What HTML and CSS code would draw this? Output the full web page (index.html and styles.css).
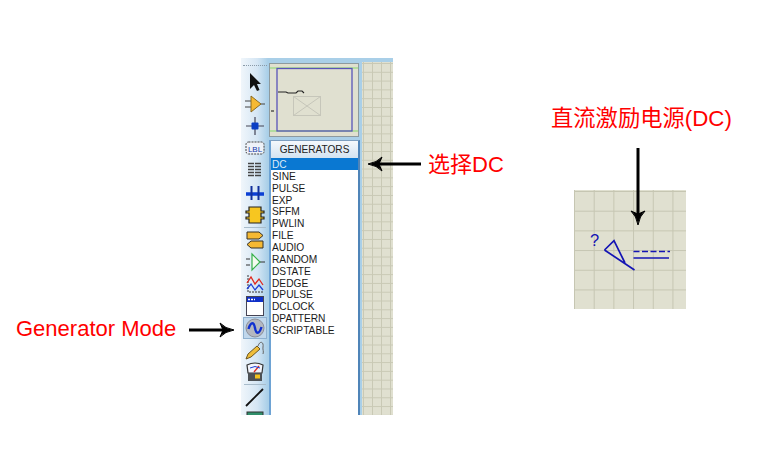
FILE: index.html
```html
<!DOCTYPE html>
<html lang="en">
<head>
    <meta charset="UTF-8">
    <meta name="viewport" content="width=device-width, initial-scale=1.0">
    <title>Generator Mode</title>
    <link rel="stylesheet" href="styles.css">
</head>
<body>

<div class="figure">
    <!-- Editor window cut-out -->
    <div class="window">
        <div class="toolbar">
            <div class="grip"></div>
            <div class="tool">
                <svg width="20" height="20" viewBox="0 0 20 20"><path d="M5 1 L5 17 L9 13 L12 19 L14.5 18 L12 12 L16 12 Z" fill="#111"/></svg>
            </div>
            <div class="tool">
                <svg width="20" height="20" viewBox="0 0 20 20"><path d="M0 7 H6 M0 13 H6 M15 10 H20" stroke="#444" stroke-width="1.2" fill="none"/><path d="M6 2 L16 10 L6 18 Z" fill="#f5b933" stroke="#8a6a20"/></svg>
            </div>
            <div class="tool">
                <svg width="20" height="20" viewBox="0 0 20 20"><path d="M1 10 H19 M10 1 V19" stroke="#445" stroke-width="1.2"/><rect x="6.500" y="6.500" width="7" height="7" rx="1" fill="#0b3fc4"/></svg>
            </div>
            <div class="tool">
                <svg width="20" height="20" viewBox="0 0 20 20"><rect x="1" y="4" width="18" height="12" rx="2.500" fill="#eef2f8" stroke="#444" stroke-dasharray="2 1"/><text x="10" y="13.500" text-anchor="middle" class="lbl-text">LBL</text></svg>
            </div>
            <div class="tool">
                <svg width="20" height="20" viewBox="0 0 20 20"><path d="M3 3.500 H17 M3 6.500 H17 M3 9.500 H17 M3 12.500 H17 M3 15.500 H17" stroke="#444" stroke-width="1.300" stroke-dasharray="6 1"/></svg>
            </div>
            <div class="tool">
                <svg width="20" height="20" viewBox="0 0 20 20"><path d="M1 11 H19" stroke="#0b3fd4" stroke-width="3.500"/><path d="M6.500 3 V17 M13.500 3 V17" stroke="#10309c" stroke-width="2"/></svg>
            </div>
            <div class="tool">
                <svg width="20" height="20" viewBox="0 0 20 20"><path d="M4 2 H16 V6 H19 V8 H16 V12 H19 V14 H16 V18 H4 V14 H1 V12 H4 V8 H1 V6 H4 Z" fill="#f7c620" stroke="#222" stroke-width="1.200"/></svg>
            </div>
            <div class="tool-sep"></div>
            <div class="tool">
                <svg width="20" height="20" viewBox="0 0 20 20"><path d="M2 2 H14 L18 5.500 L14 9 H2 Z M18 11 H6 L2 14.500 L6 18 H18 Z" fill="#f5b933" stroke="#33302a"/></svg>
            </div>
            <div class="tool">
                <svg width="20" height="20" viewBox="0 0 20 20"><path d="M1 7 H5 M1 13 H5" stroke="#333"/><path d="M15 10 H20" stroke="#333"/><path d="M7 2 L15 10 L7 18 Z" fill="#f4fbf0" stroke="#35b04a" stroke-width="1.200"/></svg>
            </div>
            <div class="tool">
                <svg width="20" height="20" viewBox="0 0 20 20"><path d="M3 1 V18 H19" stroke="#333" stroke-dasharray="2 1" fill="none"/><path d="M2 9 L6 3 L10 10 L14 5 L18 11" stroke="#e0281e" stroke-width="1.300" fill="none"/><path d="M2 15 L6 10 L10 16 L14 11 L18 16" stroke="#1c3fd8" stroke-width="1.300" fill="none"/></svg>
            </div>
            <div class="tool">
                <svg width="20" height="20" viewBox="0 0 20 20"><rect x="1.500" y="0.500" width="17" height="19" fill="#fff" stroke="#445"/><rect x="2" y="1" width="16" height="5" fill="#0f2fc8"/><path d="M3 3.500 H10" stroke="#fff" stroke-width="1.500" stroke-dasharray="2 1"/></svg>
            </div>
            <div class="tool tool-active">
                <svg width="20" height="20" viewBox="0 0 20 20"><circle cx="10" cy="10" r="9" fill="#b4b7c0" stroke="#8c8f98"/><path d="M3.500 11 C6 3 9 4 10 10 C11 16 14 17 16.500 9" stroke="#1030d0" stroke-width="2.400" fill="none"/></svg>
            </div>
            <div class="tool">
                <svg width="20" height="20" viewBox="0 0 20 20"><path d="M1 19 L3 14 L12 6 L15 9 L6 17 Z" fill="#efbd3a" stroke="#6b5520"/><path d="M13 6 C15 0 19 2 18 7 C17.500 10 19 11 18 14" stroke="#666" fill="none"/></svg>
            </div>
            <div class="tool">
                <svg width="20" height="20" viewBox="0 0 20 20"><path d="M2 3 Q10 -1 18 3 L17 11 H3 Z" fill="#f2f4fa" stroke="#333" stroke-width="1.200"/><path d="M9 10 L14 4" stroke="#e0281e" stroke-width="1.300"/><path d="M5 6 Q10 3 15 6" stroke="#1c3fd8" fill="none"/><rect x="3" y="11" width="14" height="8" fill="#4d5155"/><rect x="10" y="12.500" width="5" height="4" fill="#f2c21c"/></svg>
            </div>
            <div class="tool-sep"></div>
            <div class="tool">
                <svg width="20" height="20" viewBox="0 0 20 20"><path d="M1 19 L18 2" stroke="#111" stroke-width="1.800"/></svg>
            </div>
            <div class="tool">
                <svg width="20" height="20" viewBox="0 0 20 20"><rect x="2" y="3" width="16" height="14" fill="#2f8f6a" stroke="#333"/></svg>
            </div>
        </div>

        <div class="side-panel">
            <div class="preview">
                <svg width="90" height="74" viewBox="0 0 90 74">
                    <path d="M1 5 H89 M1 68 H89" stroke="#85d86e" stroke-width="1"/>
                    <rect x="8" y="5.500" width="75" height="62.500" fill="none" stroke="#5a55b8" stroke-width="1.300"/>
                    <path d="M9 29 H17 L19 30 H27 L29 28 H33 L35 30" fill="none" stroke="#222" stroke-width="1.100"/>
                    <path d="M2 48 H5" stroke="#222" stroke-width="1.100"/>
                    <rect x="24.500" y="33.500" width="27" height="19" fill="none" stroke="#c6c6ba" stroke-width="1"/>
                    <path d="M24.500 33.500 L51.500 52.500 M51.500 33.500 L24.500 52.500" stroke="#c6c6ba"/>
                </svg>
            </div>
            <div class="device-list">
                <div class="list-title">GENERATORS</div>
                <ul class="list-items">
                    <li class="selected">DC</li>
                    <li>SINE</li>
                    <li>PULSE</li>
                    <li>EXP</li>
                    <li>SFFM</li>
                    <li>PWLIN</li>
                    <li>FILE</li>
                    <li>AUDIO</li>
                    <li>RANDOM</li>
                    <li>DSTATE</li>
                    <li>DEDGE</li>
                    <li>DPULSE</li>
                    <li>DCLOCK</li>
                    <li>DPATTERN</li>
                    <li>SCRIPTABLE</li>
                </ul>
            </div>
        </div>

        <div class="workspace"></div>
    </div>

    <!-- Annotations -->
    <div class="note note-mode">Generator Mode</div>
    <div class="note note-pick">选择DC</div>
    <div class="note note-source">直流激励电源(DC)</div>

    <svg class="arrow arrow-mode" width="46" height="16" viewBox="0 0 46 16"><path d="M0 8 H38" stroke="#000" stroke-width="3"/><path d="M31 1 Q36 6.500 45 8 Q36 9.500 31 15 L34 8 Z" stroke="#000" stroke-width="1"/></svg>
    <svg class="arrow arrow-pick" width="54" height="16" viewBox="0 0 54 16"><path d="M54 8 H8" stroke="#000" stroke-width="3"/><path d="M15 1 Q10 6.500 1 8 Q10 9.500 15 15 L12 8 Z" stroke="#000" stroke-width="1"/></svg>

    <!-- Symbol placed on schematic grid -->
    <div class="symbol-sheet">
        <svg class="symbol" width="112" height="119" viewBox="0 0 112 119">
            <path d="M30.500 60 L40 50.700 L51 73 M30.500 60 L60.500 80" fill="none" stroke="#1414b4" stroke-width="1.700"/>
            <path d="M59.500 61.500 H96" stroke="#1414b4" stroke-width="1.700" stroke-dasharray="6 2.500"/>
            <path d="M59.500 68 H95" stroke="#1414b4" stroke-width="1.700"/>
            <text x="16" y="56" class="symbol-mark">?</text>
        </svg>
    </div>
    <svg class="arrow arrow-source" width="16" height="80" viewBox="0 0 16 80"><path d="M8 0 V70" stroke="#000" stroke-width="3"/><path d="M1 63 Q6.500 68 8 77 Q9.500 68 15 63 L8 66 Z" stroke="#000" stroke-width="1"/></svg>
</div>

</body>
</html>
```

FILE: styles.css
```css
html, body {
    margin: 0;
    height: 100%;
    background-color: #fff;
}
.figure {
    position: relative;
    width: 772px;
    height: 471px;
    overflow: hidden;
    padding: 58px 0 0 241px;
    box-sizing: border-box;
    font-family: "Liberation Sans", Arial, sans-serif;
}
.window {
    display: flex;
    width: 152px;
    height: 357px;
    overflow: hidden;
    background-color: #a9cfe8;
}
.toolbar {
    width: 27px;
    flex: none;
    background: linear-gradient(to right, #f0f6fb, #d5e6f4 60%, #a9cfe8);
    display: flex;
    flex-direction: column;
    align-items: center;
    padding-top: 7px;
    box-sizing: border-box;
}
.grip {
    width: 24px;
    height: 0;
    border-top: 1px dotted #8a9aa8;
    margin-bottom: 5px;
}
.tool {
    width: 24px;
    height: 22.1px;
    flex: none;
    display: flex;
    align-items: center;
    justify-content: center;
    box-sizing: border-box;
}
.tool-active {
    background-color: #c0d7ec;
    border: 1px solid #8fb1d0;
}
.tool-sep {
    width: 22px;
    height: 1px;
    margin: 1px 0;
    flex: none;
    background-color: #a8bccb;
}
.lbl-text {
    font-size: 8px;
    fill: #1438a8;
    font-family: "Liberation Sans", Arial, sans-serif;
}
.side-panel {
    width: 92px;
    flex: none;
    padding: 5px 1px 0;
    box-sizing: border-box;
    display: flex;
    flex-direction: column;
    gap: 3px;
}
.preview {
    height: 74px;
    flex: none;
    background-color: #e0e0d0;
    box-shadow: inset 0 0 0 1px #8e9a9e;
}
.preview svg {
    display: block;
}
.device-list {
    flex: 1;
    display: flex;
    flex-direction: column;
    border-top: 1px solid #7d9fc0;
    border-right: 2px solid #4f84b8;
    border-left: 2px solid #6ea3d4;
    background-color: #fff;
    margin-right: -1px;
}
.list-title {
    height: 17px;
    line-height: 18px;
    text-align: center;
    font-size: 10.1px;
    color: #222;
    background: linear-gradient(to bottom, #f4f8fc, #d3e3f1);
}
.list-items {
    list-style: none;
    margin: 0;
    padding: 0;
    font-size: 10.2px;
    color: #1a1a1a;
}
.list-items li {
    height: 11.86px;
    line-height: 14px;
    padding-left: 1px;
}
.list-items .selected {
    background-color: #0a78d2;
    color: #dbe9f6;
}
.workspace {
    flex: 1;
    margin: 4px 0 0 2px;
    background-color: #e0e0d0;
    background-image:
        linear-gradient(to right, #c9c9b5 1px, transparent 1px),
        linear-gradient(to bottom, #c9c9b5 1px, transparent 1px);
    background-size: 9px 8.8px;
    background-position: 1px 1px;
}
.note {
    position: absolute;
    color: #f00;
    font-size: 22px;
    line-height: 26px;
    white-space: nowrap;
    font-family: "Liberation Sans", "Noto Sans CJK SC", sans-serif;
}
.note-mode {
    left: 16px;
    top: 316px;
}
.note-pick {
    left: 428px;
    top: 152px;
}
.note-source {
    left: 551px;
    top: 106px;
    font-size: 22.3px;
}
.arrow {
    position: absolute;
}
.arrow-mode {
    left: 189px;
    top: 322px;
}
.arrow-pick {
    left: 367px;
    top: 156px;
}
.arrow-source {
    left: 630px;
    top: 148px;
}
.symbol-sheet {
    position: absolute;
    left: 574px;
    top: 190px;
    width: 112px;
    height: 119px;
    background-color: #e0e0d0;
    background-image:
        linear-gradient(to right, #c6c6b2 1px, transparent 1px),
        linear-gradient(to bottom, #c6c6b2 1px, transparent 1px);
    background-size: 19.7px 19.7px;
    background-position: 0 1px;
}
.symbol {
    display: block;
}
.symbol-mark {
    font-size: 16.5px;
    fill: #1414b4;
    font-family: "Liberation Sans", Arial, sans-serif;
}
```
